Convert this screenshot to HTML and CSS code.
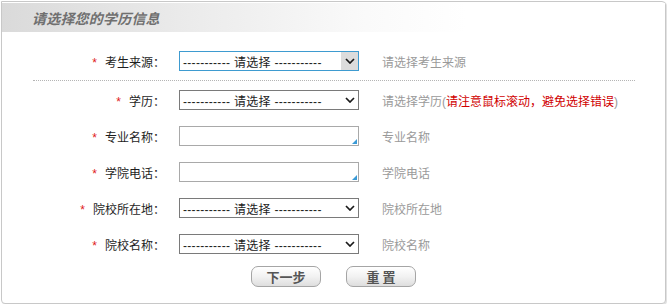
FILE: index.html
```html
<!DOCTYPE html>
<html lang="zh-CN">
<head>
<meta charset="utf-8">
<title>请选择您的学历信息</title>
<link rel="stylesheet" href="styles.css">
</head>
<body>
<div class="panel">
  <div class="panel-head"><h2 class="title">请选择您的学历信息</h2></div>
  <div class="form">
    <div class="row">
      <div class="label"><span class="req">*</span>考生来源：</div>
      <div class="select focus"><span class="sel-text">----------- 请选择 -----------</span><span class="sel-arrow"><svg width="10" height="6" viewBox="0 0 10 6"><polyline points="1,1 5,5 9,1" fill="none" stroke="#1a1a1a" stroke-width="1.7"/></svg></span></div>
      <div class="hint">请选择考生来源</div>
    </div>
    <div class="divider"></div>
    <div class="row">
      <div class="label"><span class="req">*</span>学历：</div>
      <div class="select"><span class="sel-text">----------- 请选择 -----------</span><span class="sel-arrow"><svg width="10" height="6" viewBox="0 0 10 6"><polyline points="1,1 5,5 9,1" fill="none" stroke="#1a1a1a" stroke-width="1.7"/></svg></span></div>
      <div class="hint">请选择学历(<span class="warn">请注意鼠标滚动，避免选择错误</span>)</div>
    </div>
    <div class="row">
      <div class="label"><span class="req">*</span>专业名称：</div>
      <div class="input"><svg class="grip" width="5" height="5" viewBox="0 0 5 5"><polygon points="5,0 5,5 0,5" fill="#3a9ad6"/></svg></div>
      <div class="hint">专业名称</div>
    </div>
    <div class="row">
      <div class="label"><span class="req">*</span>学院电话：</div>
      <div class="input"><svg class="grip" width="5" height="5" viewBox="0 0 5 5"><polygon points="5,0 5,5 0,5" fill="#3a9ad6"/></svg></div>
      <div class="hint">学院电话</div>
    </div>
    <div class="row">
      <div class="label"><span class="req">*</span>院校所在地：</div>
      <div class="select"><span class="sel-text">----------- 请选择 -----------</span><span class="sel-arrow"><svg width="10" height="6" viewBox="0 0 10 6"><polyline points="1,1 5,5 9,1" fill="none" stroke="#1a1a1a" stroke-width="1.7"/></svg></span></div>
      <div class="hint">院校所在地</div>
    </div>
    <div class="row">
      <div class="label"><span class="req">*</span>院校名称：</div>
      <div class="select"><span class="sel-text">----------- 请选择 -----------</span><span class="sel-arrow"><svg width="10" height="6" viewBox="0 0 10 6"><polyline points="1,1 5,5 9,1" fill="none" stroke="#1a1a1a" stroke-width="1.7"/></svg></span></div>
      <div class="hint">院校名称</div>
    </div>
    <div class="buttons">
      <button class="btn" type="button">下一步</button>
      <button class="btn" type="button">重 置</button>
    </div>
  </div>
</div>
</body>
</html>
```
FILE: styles.css
```css
* { box-sizing: border-box; }
html, body { margin: 0; padding: 0; background: #fff; }
body {
  font-family: "Liberation Sans", "Noto Sans CJK SC", sans-serif;
  font-size: 12px;
  color: #222;
}
.panel {
  margin: 1px 0 0 1px;
  width: 665px;
  height: 303px;
  border: 1px solid #c8c8c8;
  border-radius: 0 4px 4px 4px;
  box-shadow: 1px 1px 0 #e2e2e2;
  background: #fff;
}
.panel-head {
  margin-top: 1px;
  height: 29px;
  background: linear-gradient(to right, #dadada 0%, #ececec 30%, #fafafa 55%, #ffffff 70%);
  display: flex;
  align-items: center;
  padding-left: 30px;
}
.title {
  margin: 0;
  font-size: 14px;
  font-style: italic;
  font-weight: bold;
  color: #707070;
  letter-spacing: 0.2px;
}
.form {
  padding: 19px 0 0 31px;
  display: flex;
  flex-direction: column;
}
.row {
  display: flex;
  align-items: center;
  height: 20px;
  margin-bottom: 16px;
}
.row:first-child { margin-bottom: 9px; }
.label {
  width: 132px;
  margin-right: 14px;
  text-align: right;
  color: #1e1e1e;
  white-space: nowrap;
}
.req {
  color: #e02020;
  margin-right: 8px;
}
.select {
  width: 180px;
  height: 20px;
  border: 1px solid #7a7a7a;
  display: flex;
  align-items: center;
  background: #fff;
}
.select.focus { border-color: #3e9bd0; }
.sel-text {
  flex: 1;
  padding-left: 3px;
  color: #222;
  white-space: nowrap;
  overflow: hidden;
  letter-spacing: 0.3px;
}
.sel-arrow {
  width: 17px;
  height: 18px;
  display: flex;
  align-items: center;
  justify-content: center;
}
.select.focus .sel-arrow { background: #dcdcdc; }
.input {
  width: 180px;
  height: 20px;
  border: 1px solid #a9a9a9;
  display: flex;
  align-items: flex-end;
  justify-content: flex-end;
  padding: 0 1px 1px 0;
}
.hint {
  margin-left: 23px;
  color: #9a9a9a;
  white-space: nowrap;
}
.warn { color: #d00000; }
.divider {
  width: 602px;
  border-top: 1px dotted #b5b5b5;
  margin-bottom: 9px;
}
.buttons {
  display: flex;
  justify-content: center;
  gap: 25px;
  margin: -4px 0 0 -31px;
}
.btn {
  width: 70px;
  height: 21px;
  padding: 0;
  border: 1px solid #a5a5a5;
  border-radius: 7px;
  background: linear-gradient(#ffffff, #f2f2f2 50%, #dedede);
  font-family: "Noto Sans CJK SC", sans-serif;
  font-size: 13px;
  font-weight: bold;
  color: #555;
  line-height: 19px;
}
```
